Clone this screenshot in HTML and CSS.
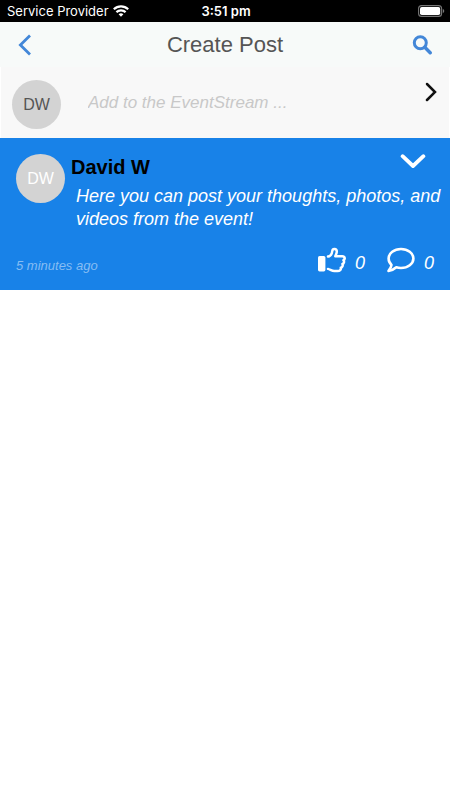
FILE: index.html
```html
<!DOCTYPE html>
<html lang="en">
<head>
    <meta charset="UTF-8">
    <meta name="viewport" content="width=device-width, initial-scale=1">
    <title>Create Post</title>
    <link rel="stylesheet" href="styles.css">
</head>
<body>
    <div class="status-bar">
        <div class="carrier">
            <span>Service Provider</span>
            <svg width="16" height="12" viewBox="0 0 16 12" fill="none" stroke="#fff" stroke-width="2.2">
                <path d="M0.8 4.3C4.9 0.4 11.1 0.4 15.2 4.3"/>
                <path d="M3.4 7.1C6 4.7 10 4.7 12.6 7.1"/>
                <path d="M5.6 9.2C7 7.9 9 7.9 10.4 9.2L8 11.7Z" fill="#fff" stroke="none"/>
            </svg>
        </div>
        <span class="clock">3:51 pm</span>
        <svg class="battery" width="27" height="12" viewBox="0 0 27 12">
            <rect x="0.6" y="0.6" width="23" height="10.8" rx="3" fill="none" stroke="#777" stroke-width="1.1"/>
            <rect x="2" y="2" width="20.2" height="8" rx="1.8" fill="#fff"/>
            <path d="M24.8 4v4c0.9-0.4 1.4-1.1 1.4-2s-0.5-1.6-1.4-2z" fill="#777"/>
        </svg>
    </div>

    <header class="header">
        <a class="icon-link" href="#" aria-label="Back">
            <svg width="14" height="22" viewBox="0 0 14 22" fill="none" stroke="#4387d8" stroke-width="2.8">
                <path d="M12 1.6L2.4 11L12 20.4"/>
            </svg>
        </a>
        <h1>Create Post</h1>
        <button class="icon-button" type="button" aria-label="Search">
            <svg width="20" height="20" viewBox="0 0 20 20" fill="none" stroke="#4387d8">
                <circle cx="8.3" cy="7.8" r="6" stroke-width="3"/>
                <path d="M12.8 12.3L18.2 17.8" stroke-width="3.4" stroke-linecap="round"/>
            </svg>
        </button>
    </header>

    <form class="composer">
        <span class="avatar">DW</span>
        <input type="text" aria-label="Add to the EventStream" placeholder="Add to the EventStream ...">
        <button class="icon-button" type="submit" aria-label="Next">
            <svg width="12" height="20" viewBox="0 0 12 20" fill="none" stroke="#111" stroke-width="2.5" stroke-linecap="round">
                <path d="M2 2L10 10L2 18"/>
            </svg>
        </button>
    </form>

    <article class="post">
        <span class="avatar avatar-light">DW</span>
        <div class="post-body">
            <div class="post-head">
                <h2>David W</h2>
                <button class="icon-button" type="button" aria-label="More">
                    <svg width="26" height="16" viewBox="0 0 26 16" fill="none" stroke="#fff" stroke-width="3.8" stroke-linecap="round" stroke-linejoin="round">
                        <path d="M2.6 2.2L13 12L23.4 2.2"/>
                    </svg>
                </button>
            </div>
            <p>Here you can post your thoughts, photos, and videos from the event!</p>
        </div>
        <footer class="post-footer">
            <time>5 minutes ago</time>
            <button class="action" type="button" aria-label="Like">
                <svg width="28" height="26" viewBox="0 0 28 26">
                    <rect x="0" y="9" width="7.4" height="15.4" rx="1.6" fill="#fff"/>
                    <path d="M10 9.6C12.5 9.2 14 6.5 14.3 3.8C14.6 1.2 18.6 1.3 18.8 4.3C18.9 6.2 17.8 7.6 17.3 9.2H24.2C27.2 9.2 27.4 12.4 25.4 13.1C26.6 14.4 26 16.6 24.4 17C25.2 18.6 24.4 20.4 22.8 20.7C23.2 22.8 21.8 24 19.6 24H16.4C13.8 24 12.2 22.4 10 21.9" fill="none" stroke="#fff" stroke-width="2.5" stroke-linecap="round" stroke-linejoin="round"/>
                </svg>
                <span>0</span>
            </button>
            <button class="action" type="button" aria-label="Comment">
                <svg width="28" height="26" viewBox="0 0 28 26" fill="none" stroke="#fff" stroke-width="2.6" stroke-linejoin="round">
                    <path d="M14 2C20.8 2 26.4 6.2 26.4 11.5S20.8 21 14 21C12.3 21 10.7 20.8 9.3 20.3C7 22.4 4.5 23.6 1.5 23.9C3.1 22.1 4.3 20 4.5 17.9C2.6 16.1 1.6 14 1.6 11.5C1.6 6.2 7.2 2 14 2Z"/>
                </svg>
                <span>0</span>
            </button>
        </footer>
    </article>
</body>
</html>
```
FILE: styles.css
```css
* {
    box-sizing: border-box;
}
body {
    margin: 0;
    background: #fff;
    font-family: "Liberation Sans", Arial, sans-serif;
}
svg {
    display: block;
}
h1, h2, p {
    margin: 0;
}
button {
    font: inherit;
    color: inherit;
    background: none;
    border: none;
    padding: 0;
    cursor: pointer;
}
.status-bar {
    display: grid;
    grid-template-columns: 1fr auto 1fr;
    align-items: center;
    height: 22px;
    padding: 0 5px 0 7px;
    background: #000;
    color: #fff;
    font-family: Inter, sans-serif;
    font-size: 13px;
}
.carrier {
    display: flex;
    align-items: center;
    gap: 4px;
}
.clock {
    font-weight: 600;
}
.battery {
    justify-self: end;
}
.header {
    display: flex;
    align-items: center;
    justify-content: space-between;
    height: 45px;
    padding: 0 18px;
    background: #f7faf9;
}
.header h1 {
    color: #555;
    font-size: 22px;
    font-weight: normal;
}
.icon-link {
    width: 20px;
}
.composer {
    display: flex;
    align-items: flex-start;
    height: 71px;
    margin: 0 1px;
    padding: 13px 12px 0 11px;
    background: #f8f8f8;
}
.composer input {
    flex: 1;
    min-width: 0;
    height: 24px;
    margin: 11px 0 0 27px;
    padding: 0;
    border: none;
    outline: none;
    background: none;
    font-family: inherit;
    font-size: 17px;
    font-style: italic;
}
.composer input::placeholder {
    color: #c8c8c8;
    opacity: 1;
}
.composer .icon-button {
    margin-top: 2px;
}
.avatar {
    display: flex;
    flex: none;
    align-items: center;
    justify-content: center;
    width: 49px;
    height: 49px;
    border-radius: 50%;
    background: #d3d3d3;
    color: #555;
    font-size: 16px;
}
.avatar-light {
    color: #fff;
}
.post {
    display: grid;
    grid-template-columns: auto 1fr;
    column-gap: 6px;
    padding: 16px 8px 16px 16px;
    background: #1882e8;
    color: #fff;
}
.post-head {
    display: flex;
    align-items: flex-start;
    justify-content: space-between;
    height: 31px;
    padding-right: 16px;
}
.post-head h2 {
    color: #000;
    font-size: 20px;
    line-height: 26px;
}
.post-body p {
    padding-left: 5px;
    font-size: 18px;
    font-style: italic;
    line-height: 23px;
}
.post-footer {
    grid-column: 1 / -1;
    display: flex;
    align-items: center;
    gap: 22px;
    margin-top: 14px;
    padding-right: 8px;
    font-style: italic;
}
.post-footer time {
    margin-right: auto;
    padding-top: 12px;
    color: #86bdf3;
    font-size: 13px;
}
.action {
    display: flex;
    align-items: center;
    gap: 9px;
    font-size: 18px;
    font-style: italic;
}
.action span {
    padding-top: 8px;
}
```
